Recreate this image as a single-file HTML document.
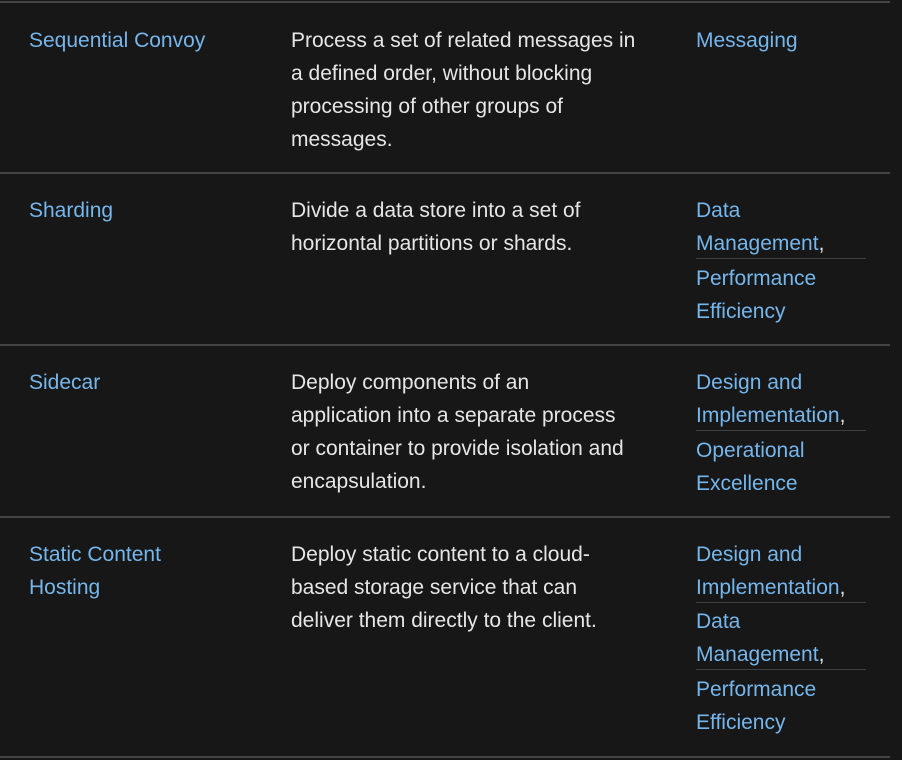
<!DOCTYPE html>
<html><head><style>
body{margin:0;background:#171717;width:902px;height:760px;overflow:hidden;position:relative;font-family:"Liberation Sans",sans-serif;font-size:21px;}
.hl{position:absolute;left:0;width:890px;height:2px;background:#454545;}
.t{position:absolute;line-height:33px;white-space:nowrap;color:#e6e6e6;}
.a{color:#75b6ec;}
.s{position:absolute;left:696px;width:170px;height:1px;background:#404040;}
</style></head><body>
<div class="hl" style="top:1px"></div>
<div class="hl" style="top:172px"></div>
<div class="hl" style="top:344px"></div>
<div class="hl" style="top:516px"></div>
<div class="hl" style="top:756px"></div>

<div class="t a" style="left:29px;top:24px">Sequential Convoy</div>
<div class="t" style="left:291px;top:24px">Process a set of related messages in<br>a defined order, without blocking<br>processing of other groups of<br>messages.</div>
<div class="t a" style="left:696px;top:24px">Messaging</div>

<div class="t a" style="left:29px;top:194px">Sharding</div>
<div class="t" style="left:291px;top:194px">Divide a data store into a set of<br>horizontal partitions or shards.</div>
<div class="t a" style="left:696px;top:194px">Data<br>Management<span style="color:#e6e6e6">,</span></div>
<div class="s" style="top:258px"></div>
<div class="t a" style="left:696px;top:262px">Performance<br>Efficiency</div>

<div class="t a" style="left:29px;top:366px">Sidecar</div>
<div class="t" style="left:291px;top:366px">Deploy components of an<br>application into a separate process<br>or container to provide isolation and<br>encapsulation.</div>
<div class="t a" style="left:696px;top:366px">Design and<br>Implementation<span style="color:#e6e6e6">,</span></div>
<div class="s" style="top:430px"></div>
<div class="t a" style="left:696px;top:434px">Operational<br>Excellence</div>

<div class="t a" style="left:29px;top:538px">Static Content<br>Hosting</div>
<div class="t" style="left:291px;top:538px">Deploy static content to a cloud-<br>based storage service that can<br>deliver them directly to the client.</div>
<div class="t a" style="left:696px;top:538px">Design and<br>Implementation<span style="color:#e6e6e6">,</span></div>
<div class="s" style="top:602px"></div>
<div class="t a" style="left:696px;top:605px">Data<br>Management<span style="color:#e6e6e6">,</span></div>
<div class="s" style="top:669px"></div>
<div class="t a" style="left:696px;top:673px">Performance<br>Efficiency</div>
</body></html>
